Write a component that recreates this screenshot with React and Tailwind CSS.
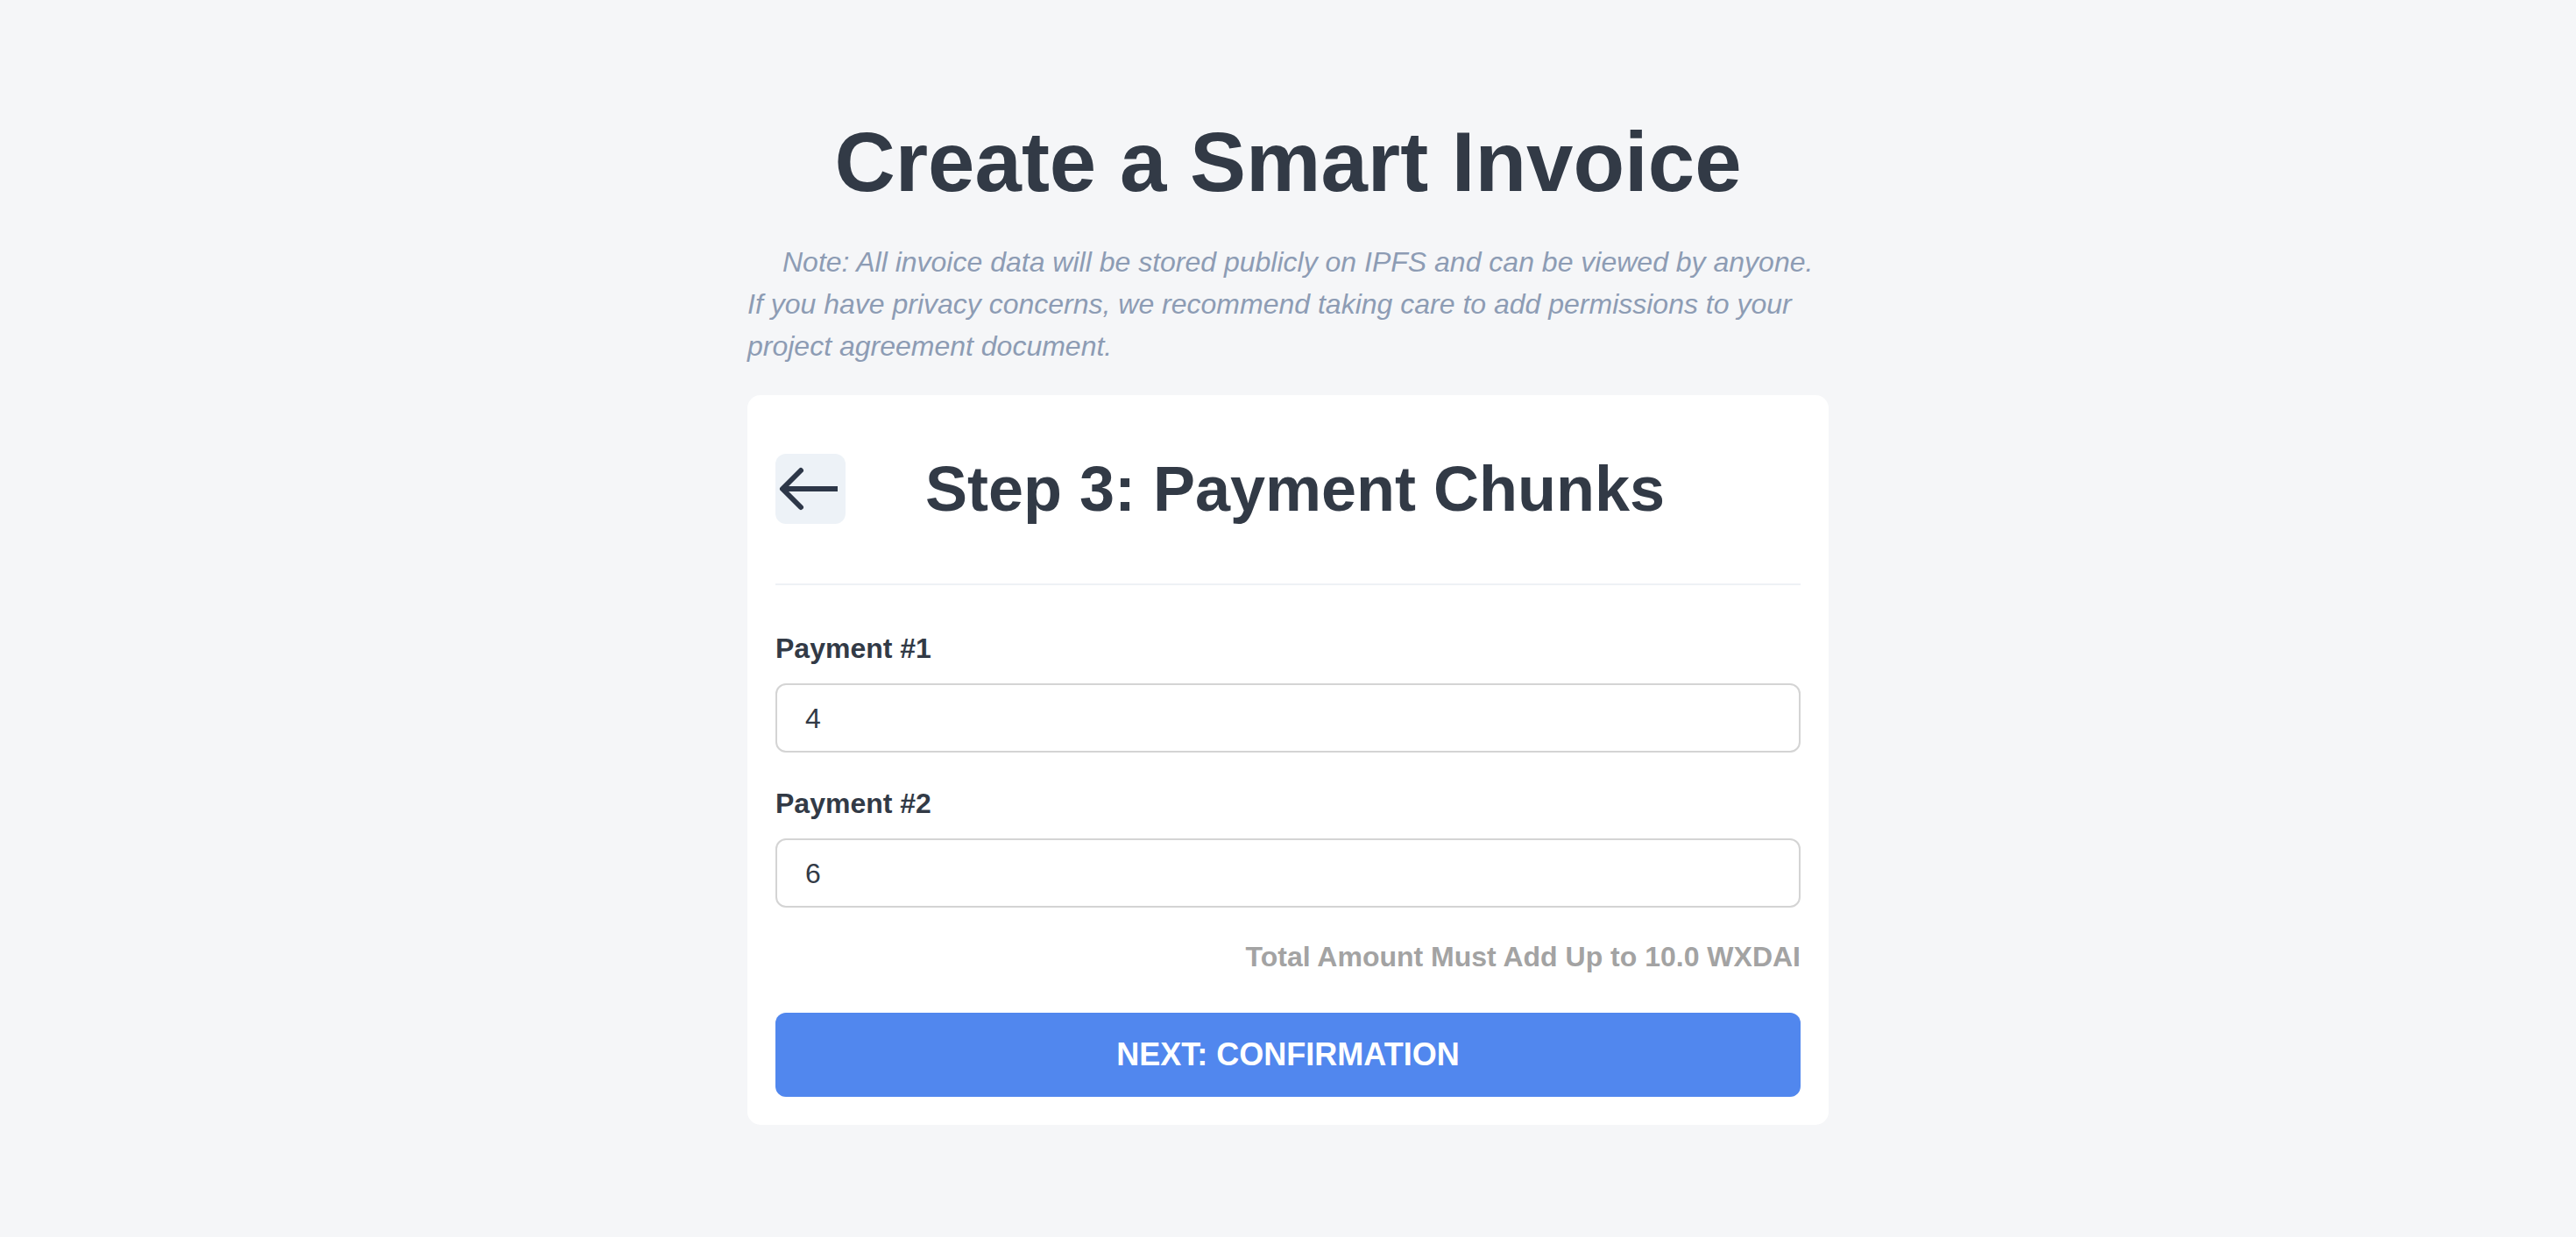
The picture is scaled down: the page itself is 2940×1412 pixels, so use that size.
import React from "react";

export default function App() {
  const font = { fontFamily: '"Liberation Sans", Arial, Helvetica, sans-serif' };
  return (
    <div className="min-h-screen w-full bg-[#f5f6f8] flex flex-col items-center" style={font}>
      <h1 className="mt-[137px] text-[96px] leading-none font-bold text-[#323a46] text-center">
        Create a Smart Invoice
      </h1>
      <p className="mt-[42px] w-[1234px] indent-[40px] text-[32px] leading-[48px] italic text-[#8d9cb4]">
        Note: All invoice data will be stored publicly on IPFS and can be viewed by anyone. If you have privacy concerns, we recommend taking care to add permissions to your project agreement document.
      </p>
      <div className="mt-[32px] w-[1234px] bg-white rounded-[15px] px-[32px] pt-[67px] pb-[32px] flex flex-col">
        <div className="grid grid-cols-[80px_1fr_64px] items-center h-[80px]">
          <button className="w-[80px] h-[80px] rounded-[12px] bg-[#edf2f7] flex items-center justify-center">
            <svg width="80" height="80" viewBox="0 0 80 80" fill="none">
              <path d="M29 19 L8 40 L29 61" stroke="#2d3748" strokeWidth="6" strokeLinecap="round" strokeLinejoin="round" />
              <path d="M10 40 H71" stroke="#2d3748" strokeWidth="6" strokeLinecap="butt" />
            </svg>
          </button>
          <h2 className="text-[72px] leading-none font-bold text-[#323a46] text-center">
            Step 3: Payment Chunks
          </h2>
          <div />
        </div>
        <div className="mt-[68px] h-[2px] bg-[#eef1f5]" />
        <label className="mt-[52px] text-[32px] leading-[40px] font-bold text-[#323a46]">Payment #1</label>
        <div className="mt-[20px] h-[79px] rounded-[12px] border-2 border-[#d4d4d4] flex items-center px-[32px] text-[32px] text-[#323a46]">
          4
        </div>
        <label className="mt-[38px] text-[32px] leading-[40px] font-bold text-[#323a46]">Payment #2</label>
        <div className="mt-[20px] h-[79px] rounded-[12px] border-2 border-[#d4d4d4] flex items-center px-[32px] text-[32px] text-[#323a46]">
          6
        </div>
        <p className="mt-[36px] text-right text-[32px] leading-[40px] font-bold text-[#a3a3a3]">
          Total Amount Must Add Up to 10.0 WXDAI
        </p>
        <button className="mt-[44px] h-[96px] rounded-[12px] bg-[#5187ee] text-white text-[36px] font-bold flex items-center justify-center">
          NEXT: CONFIRMATION
        </button>
      </div>
    </div>
  );
}
